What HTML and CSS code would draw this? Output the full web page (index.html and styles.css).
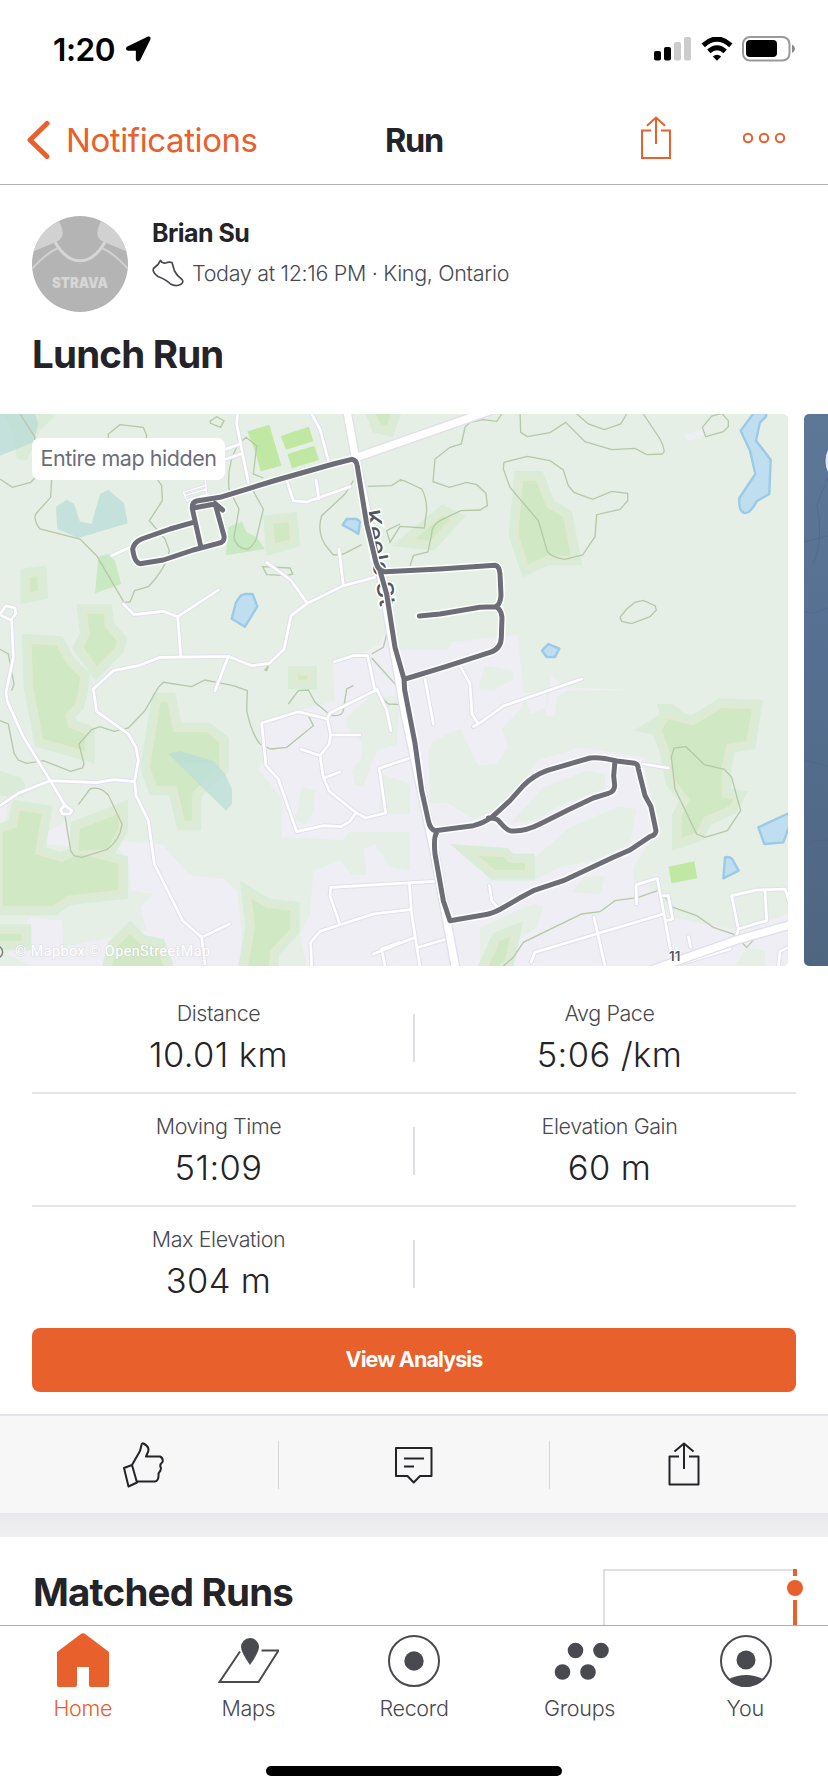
FILE: index.html
```html
<!DOCTYPE html>
<html lang="en">
<head>
<meta charset="utf-8">
<title>Run</title>
<link rel="stylesheet" href="styles.css">
</head>
<body>
<div class="screen">
  <header class="status">
    <div class="clock"><span>1:20</span>
      <svg width="26" height="26" viewBox="0 0 26 26"><path d="M23.4 1.2 2.2 11.4Q.8 13.5 3 13.9H11.6V23.2Q12.6 26 14.7 23.4L24.8 2.8Q25 .8 23.4 1.2Z" stroke="#000" stroke-width="1.500" stroke-linejoin="round"/></svg>
    </div>
    <div class="signals">
      <svg width="38" height="24" viewBox="0 0 38 24"><rect y="14" width="7" height="9.5" rx="2"/><rect x="10" y="10" width="7" height="13.5" rx="2"/><rect x="20" y="5" width="7" height="18.5" rx="2" fill="#ccc"/><rect x="30" width="7" height="23.5" rx="2" fill="#ccc"/></svg>
      <svg class="wifi" width="32" height="24" viewBox="0 0 32 24"><path d="M2.2 8.3Q16-4.200 29.800 8.300" fill="none" stroke="#000" stroke-width="5"/><path d="M7.800 14.300Q16 7.200 24.200 14.300" fill="none" stroke="#000" stroke-width="5"/><path d="M11.800 19.500Q16 16 20.200 19.500L16 23.800Z"/></svg>
      <svg width="54" height="26" viewBox="0 0 54 26"><rect x="1" y="1" width="46.500" height="23.500" rx="7" fill="none" stroke="#999" stroke-width="2"/><rect x="4" y="4" width="31" height="17" rx="4"/><path d="M50 8.500Q53 10 53 12.700T50 17Z" fill="#888"/></svg>
    </div>
  </header>

  <nav class="nav">
    <a class="back"><svg width="24" height="40" viewBox="0 0 24 40"><path d="M20 3.500 3 20 20 36.500" fill="none" stroke="currentColor" stroke-width="5" stroke-linecap="round" stroke-linejoin="round"/></svg><span>Notifications</span></a>
    <h1>Run</h1>
    <div class="actions">
      <svg width="30" height="44" viewBox="0 0 30 44"><path d="M10 14.500H1V42H29V14.500H20M15 28V1.500M6 9.800 15 1.500 24 9.800" fill="none" stroke="currentColor" stroke-width="2"/></svg>
      <svg width="42" height="12" viewBox="0 0 42 12" fill="none" stroke="currentColor" stroke-width="2"><circle cx="5" cy="6" r="4.200"/><circle cx="21" cy="6" r="4.200"/><circle cx="37" cy="6" r="4.200"/></svg>
    </div>
  </nav>

  <section class="summary">
    <div class="athlete">
      <svg class="avatar" width="96" height="96" viewBox="0 0 96 96">
        <rect width="96" height="96" fill="#b4b4b4"/>
        <path d="M0 36 24 26Q33 22 30 12L25 0H0ZM96 36 72 26Q63 22 66 12L71 0H96Z" fill="#d1d1d1"/>
        <path d="M23 26C37 51 59 51 73 26" fill="none" stroke="#d6d6d6" stroke-width="3"/>
        <path d="M0 53Q13 38 26 32M96 53Q83 38 70 32" fill="none" stroke="#d1d1d1" stroke-width="2"/>
        <text x="20" y="72" textLength="56" lengthAdjust="spacingAndGlyphs">STRAVA</text>
      </svg>
      <div class="who">
        <div class="name">Brian Su</div>
        <div class="meta"><svg width="32" height="28" viewBox="0 0 32 28"><path d="M8.500 1.500Q10.500 5 13.500 4Q17 2.500 20 3.500L22.500 12Q25 17 30 20.500Q32 23 29 25.300Q24 28 18.500 25Q14 20.500 6 17.500Q0 13 1.500 9.500L6 5.500Q7.500 3 8.500 1.500Z" fill="none" stroke="currentColor" stroke-width="1.700" stroke-linejoin="round"/></svg><span>Today at 12:16 PM · King, Ontario</span></div>
      </div>
    </div>
    <h2 class="title">Lunch Run</h2>
  </section>

  <section class="carousel">
    <div class="map">
      <svg width="788" height="552" viewBox="0 0 2364 1656" preserveAspectRatio="none">
        <defs>
          <g id="woods">
            <path d="M90 490 112 487 114 530 90 535Z"/>
            <path d="M262 600H310L315 640 350 680 345 700 290 755 250 700 270 660Z"/>
            <path d="M95 690 170 695 200 750 240 790 235 830 225 870 195 900 205 940 255 960 255 1010 130 975 100 820Z"/>
            <path d="M820 330 865 325 870 375 825 388Z"/>
            <path d="M893 785H922V797H893Z"/>
            <path d="M1120-20H1180L1160 35 1140 30Z"/>
            <path d="M1245 375 1330 305 1350 315 1290 380Z"/>
            <path d="M1570 200H1608L1640 280 1690 310 1712 425 1640 425 1585 450 1555 360Z"/>
            <path d="M482 865H502L520 955H620L658 985V1060L600 1110 575 1140V1220H555L530 1115H470L450 1060Z"/>
            <path d="M60 1190 125 1200 105 1320 185 1345 240 1320 355 1350V1428L200 1445 160 1475H8V1255L50 1240Z"/>
            <path d="M240 1245 355 1200V1245L320 1305 235 1310Z"/>
            <path d="M0 1560H65V1580H0Z"/>
            <path d="M390 1560 420 1590 470 1600 500 1680H330L350 1600Z"/>
            <path d="M755 1455 800 1482 870 1490V1545L810 1610 805 1680H740L765 1540Z"/>
            <path d="M2005 915 2080 935 2165 882 2255 885 2240 980 2180 990 2165 1060V1150L2200 1155 2190 1175 2110 1210 2090 1255 2045 1270V1210L2070 1155 2025 1100 2005 1000 1985 950Z"/>
            <path d="M1435 1325 1510 1330 1530 1348H1575V1368H1485Z"/>
            <path d="M1500 1580 1530 1568 1515 1640 1470 1670H1460Z"/>
          </g>
          <g id="water-areas">
            <path d="M1270 320 1280 328 1275 365 1260 355 1228 338 1240 320Z" transform="translate(-200 -5)"/>
            <path d="M722 545 735 540H758L772 578 735 638 695 614 708 565Z"/>
            <path d="M1645 690 1678 704 1665 729H1640L1626 710Z"/>
            <path d="M2268-12H2300L2298 8 2280 25 2268 80 2312 137 2308 240 2270 262Q2250 300 2232 297 2215 290 2218 252L2266 180 2250 110 2222 50Z"/>
            <path d="M2367 1197 2275 1240 2293 1290 2350 1285 2370 1230Z"/>
            <path d="M2175 1330Q2195 1325 2202 1345L2216 1370 2170 1393Z"/>
          </g>
          <g id="streets">
            <path d="M0 600 18 575 45 582 47 600 33 618 5 605M35 620 40 730 18 835 22 862 68 965 152 1102 195 1175 215 1190 210 1200 187 1200 182 1187 195 1172M-10 1182 55 1138 150 1100 290 1106 342 1097 404 1103M370 570 402 602 490 592 533 608 655 528M533 608 542 724M280 825 340 770 415 755 480 730 685 727 755 755 808 748 852 706 873 605 922 568 1030 515 1125 490M922 568 872 498 800 445M1017 405 1030 515M685 727 645 830M280 825 290 892 385 960 408 1000 415 1040 404 1100 408 1145 445 1220 463 1350 548 1520 605 1570 688 1530M605 1570 615 1650"/>
            <path d="M714-12 710 30 745 205M720 90 670 108M722 120 670 138M935 0 960 45 985 140M862 205 880 260 920 264 1050 218M948 198 957 255M335 425 385 402"/>
            <path d="M1003 743 1060 725 1103 725 1125 830 990 897 982 915 895 893 785 927 798 1055 835 1095 890 1253 970 1235 1023 1238 1050 1222 1068 1196 988 1132 970 1090 960 1025 988 990 992 962 982 915M993 963H1080M960 1025 903 1006M972 1092 1020 1074M1068 1196 1097 1212 1157 1197 1138 1063 1230 1032M1130 825 1160 888 1173 950"/>
            <path d="M992 1420 1305 1402M992 1423 990 1445 1020 1533M1230 1487 1120 1500 960 1552 932 1585 935 1656M1145 1605 1200 1585M1145 1605 1155 1656M1228 1408 1235 1500 1260 1660M1120 1620 1245 1570M1255 1600 1340 1575M1275 795 1300 930M1380 755 1410 810 1416 900 1435 930 1420 938M1435 930 1510 876 1745 795M1930 1050 2005 1062M1468 1415 1475 1460 1495 1483M1593 1645 1605 1615 1990 1500M1782 1510 1815 1656M1910 1470 1908 1412 1972 1393 2012 1610M2005 1660 2190 1605V1575M2065 1568 2072 1600M2210 1565 2215 1545 2195 1445 2270 1428 2355 1425 2370 1470M2295 1430 2300 1520 2215 1545M1990 1445 2005 1445 2018 1515 2000 1520M2335 1660 2340 1612 2370 1598"/>
          </g>
          <path id="lanes" d="M550 235 615 215M555 245 620 225M562 258 625 240M550 235 562 262M615 190 622 262"/>
          <path id="route" d="M668 288 645 268 672 366Q675 385 655 388L580 408 490 438 420 449Q403 445 398 405 402 385 425 375L510 345 580 325M645 270 580 282M602 396 577 285Q575 265 590 261L660 250 830 198 1000 150 1055 136Q1070 138 1072 158L1100 330 1128 445Q1135 472 1155 473L1320 465 1485 454Q1498 456 1500 480L1503 545Q1500 575 1485 578L1440 580 1320 600 1258 606M1485 578Q1503 582 1506 610L1504 670Q1503 705 1470 715L1330 760 1215 795M1140 470 1160 540 1185 700 1212 795 1214 828 1245 988 1265 1130 1285 1220Q1290 1245 1305 1250L1420 1235Q1450 1228 1475 1210L1530 1160 1570 1115Q1600 1085 1640 1070L1770 1032Q1800 1028 1850 1041L1905 1048Q1914 1050 1915 1065L1935 1145 1953 1178 1968 1250Q1968 1262 1950 1268L1890 1308 1840 1330 1690 1400 1600 1430Q1560 1450 1520 1475 1480 1500 1450 1503L1350 1520 1330 1460 1305 1320Q1300 1270 1310 1255M1845 1040 1841 1085 1844 1115Q1843 1134 1825 1138L1780 1152 1710 1185 1620 1230Q1570 1255 1530 1250 1520 1248 1500 1225 1490 1210 1465 1212"/>
        </defs>
        <rect width="2364" height="1656" fill="#e5efe6"/>
        <g fill="#efeef4">
          <path d="M998 745 1100 710 1140 690 1160 650 1200 708H1345L1355 685 1552 662 1570 828 1590 900 1640 880 1655 782 1690 820 1900 828 1700 830 1670 850 1665 905H1637L1640 830 1575 838 1565 880 1505 945 1525 1000 1490 1050 1435 1055 1380 945 1300 980 1285 1010 1290 1170 1340 1165 1420 1215 1530 1170 1610 1040 1740 1000 1930 1030 1970 1250 1900 1360V1400L1970 1430 2010 1510 2220 1550 2364 1500V1656H920L900 1560 930 1500 940 1370 1020 1340 1055 1382H1100L1090 1305 1125 1290 1170 1360 1230 1370V1255H1045L1030 1278 845 1270V1155L775 1065 795 1030 790 920 1005 860Z"/>
          <path d="M340 1280 485 1290 570 1383 670 1395 710 1430 725 1550V1656H100L20 1620 90 1510 185 1520 190 1600 440 1550 420 1480 460 1440 395 1430 385 1345ZM0 1170 20 1170 15 1230 0 1235ZM140 1255 200 1220 230 1300 135 1290Z"/>
          <path d="M2052 63 2130 38 2100 73 2065 81Z"/>
        </g>
        <g fill="#e5efe6">
          <path d="M1040 910 1120 840 1200 850 1190 990 1130 1010 1090 1115H1065L1055 1070 1085 1030 1085 985 1040 940ZM905 1118 945 1130 942 1190 915 1232 885 1218ZM1145 1080 1230 1110V1200H1137ZM1455 755 1540 770V795L1480 828 1435 820ZM1535 1225 1630 1120 1760 1070 1815 1080V1125L1700 1165 1600 1220ZM1450 1400 1610 1325 1710 1240 1855 1178 1910 1185 1890 1290 1780 1340 1680 1360 1600 1400ZM1715 1435 1750 1390 1815 1385 1800 1440ZM1440 1540 1600 1470 1630 1480 1610 1540 1520 1600 1500 1656H1440ZM2205 1656 2240 1600 2295 1610V1656Z"/>
        </g>
        <g fill="#daecd8"><path d="M0 1070 60 1090 75 1110 70 1150 0 1145ZM0-12H180L120 50 80 140 50 135 40 60ZM1900 950 1980 900 1970 870 2020 870 2060 905 2000 970Z"/></g>
        <use href="#woods" class="woods-edge"/>
        <use href="#woods" class="woods-rim"/>
        <use href="#woods" class="woods-core"/>
        <g class="wet">
          <path d="M0 0H105L115 30 100 85 0 125Z"/>
          <path d="M168 278 200 257 222 270 240 323 275 330 300 240 325 227 372 268 383 328 235 372 172 345Z"/>
          <path d="M505 1020 538 1011 640 1040 675 1080 696 1125V1170L678 1190Z"/>
        </g>
        <g fill="#c9e9c2"><path d="M295 428 325 420 345 440 363 510 285 538ZM685 340 725 323 740 355 770 370 795 405 678 424Z"/></g>
        <g fill="#c1e8a3"><path d="M742 52 808 32 844 155 782 172 765 110ZM842 66 927 38 940 82 858 107ZM862 120 943 95 957 138 876 163ZM2006 1358 2083 1342 2092 1393 2014 1408Z"/></g>
        <g class="trails">
          <path d="M0 195 37 220 92 205 107 190 104 68 60 0M155 190 152 250 107 300Q100 320 120 345L240 375 290 425 372 565 390 564 404 530 445 518Q500 460 508 410L495 375 448 320 487 260 485 215 465 185M325 90V60L360 32 430 40 440 65 435 90M630 22 650 8 672 20 662 40 632 28ZM790 192 760 180 770 95 738 70 715 90Q680 150 687 225L717 285 702 370Q710 405 745 405 765 390 770 370L790 285 745 205M788 458 870 462 878 480 860 485 800 482ZM1060 200 1035 240 965 305Q950 350 975 392L1000 423 1030 420 1085 392M1103 217 1175 215 1205 195M795 768 805 756 800 770Z"/>
          <path d="M1505 0 1490 22 1450 17 1410 25 1395 40 1384 90 1350 100 1305 135 1299 203 1348 220 1400 205 1430 212 1458 238 1462 275 1440 288 1382 290 1320 320Q1295 335 1295 360L1284 414 1240 425 1230 455M1200 200 1210 199 1265 225Q1280 250 1280 290L1273 342 1200 337 1170 385 1160 350 1200 330M1560-12 1562 55 1582 68 1650 56 1697 25 1755 83 1835 107 1905 103 1940 122 1987 120Q2000 115 1980 75L1930 0M1730 0 1765 30 1813 47 1862 30 1880 0M1512 145 1582 127 1650 140 1690 168 1705 215 1722 235 1778 256 1835 232 1883 238V260L1860 286 1790 302 1785 368 1748 423 1694 436Q1655 430 1642 412L1615 320 1530 220 1510 165ZM2107 40 2135 6 2165-2 2185 20 2185 38 2170 53 2117 68ZM1860 610 1880 585 1905 565 1930 559 1965 575 1969 588 1950 608 1895 629 1865 622Z"/>
          <path d="M0 920 25 930 42 1018 55 1038 80 1048 130 1040 212 1072 247 1062 252 1050 237 990 275 947 300 938 342 952 385 942 435 890 475 820 490 805 575 818 615 798 700 815 742 830 740 890Q755 960 780 990L812 1005 860 1000 940 935 925 905M195 1205 212 1310 222 1325 245 1330 320 1307Q360 1280 366 1230L325 1143Q300 1115 270 1125L235 1172M0 706 25 720 42 810 35 830M865 870 895 830 925 828 945 865 990 903Q1025 910 1030 890L1040 825 1060 815M1115 720 1150 700 1160 660M1115 732 1230 860 1205 872 1165 870 1120 828"/>
          <path d="M1510 1656 1540 1630 1570 1585 1745 1500 1800 1493 1845 1460 1915 1450 1972 1430M1990 1445 2020 1480 2090 1505 2140 1540 2200 1560 2240 1600 2270 1568M2014 1030 2022 1002 2058 998 2113 1052 2173 1066 2195 1090 2222 1190 2182 1250 2115 1270 2090 1260 2025 1125Z"/>
        </g>
        <use href="#water-areas" class="ponds"/>
        <use href="#streets" class="street-case"/>
        <use href="#streets" class="street"/>
        <use href="#lanes" class="street-case lane-case"/>
        <use href="#lanes" class="street lane"/>
        <path class="road-case" d="M1040-12 1072 160 1145 500 1215 900 1300 1300 1370 1680M1065 132 1470-10M1920 1680 2210 1578 2380 1530"/>
        <path class="road" d="M1040-12 1072 160 1145 500 1215 900 1300 1300 1370 1680M1065 132 1470-10M1920 1680 2210 1578 2380 1530"/>
        <text class="road-name" transform="translate(1090 292) rotate(80)" textLength="292" lengthAdjust="spacingAndGlyphs">Keele St</text>
        <text class="road-number" x="2007" y="1640">11</text>
        <use href="#route" class="route-case"/>
        <use href="#route" class="route"/>
        <circle cx="-10" cy="1614" r="18" fill="none" stroke="#777" stroke-width="4"/>
        <text class="credit" x="45" y="1626" textLength="585">© Mapbox © OpenStreetMap</text>
      </svg>
      <span class="badge">Entire map hidden</span>
    </div>
    <svg class="next" width="40" height="552" viewBox="0 0 40 552"><path d="M9 150Q20 130 13 90L24 64M0 128 24 122M0 198Q12 200 24 194M0 346 24 352M0 430Q12 425 24 426" fill="none" stroke="#4c6684" opacity=".6"/><ellipse cx="32" cy="47" rx="10.500" ry="17" fill="#e4e6ee"/></svg>
  </section>

  <section class="stats">
    <div class="row"><div class="stat"><span>Distance</span><b>10.01 km</b></div><i></i><div class="stat"><span>Avg Pace</span><b>5:06 /km</b></div></div>
    <div class="row"><div class="stat"><span>Moving Time</span><b>51:09</b></div><i></i><div class="stat"><span>Elevation Gain</span><b>60 m</b></div></div>
    <div class="row"><div class="stat"><span>Max Elevation</span><b>304 m</b></div><i></i><div class="stat"></div></div>
    <button class="analysis">View Analysis</button>
  </section>

  <section class="social">
    <div><svg width="42" height="46" viewBox="0 0 42 46"><path d="M1 26 9 23 14 40.500 5.500 44.500ZM9 23 17 9 18.500 3Q19 .8 20.500 1.500 27 5 25 10L23 14.500H37Q40.500 16 39.500 20 36 23 38 26 38 29 35.500 31.500 36 39 32 39.500H13.500" fill="none" stroke="currentColor" stroke-width="2" stroke-linejoin="round"/></svg></div>
    <div><svg width="38" height="38" viewBox="0 0 38 38"><path d="M1 2H36.500V30H25L18.700 36.500 12.500 30H1ZM9 12.500H29M9 20.500H19" fill="none" stroke="currentColor" stroke-width="2" stroke-linejoin="round"/></svg></div>
    <div><svg width="32" height="44" viewBox="0 0 32 44"><path d="M11 14.500H1.500V42.500H30.500V14.500H21M16 27V1.500M6.500 9.500 16 1.500 25.500 9.500" fill="none" stroke="currentColor" stroke-width="2" stroke-linejoin="round"/></svg></div>
  </section>
  <div class="gap"></div>

  <section class="matched">
    <h2>Matched Runs</h2>
    <svg width="204" height="58" viewBox="0 0 204 58"><path d="M1 58V3H192" fill="none" stroke="#dfdfe6" stroke-width="2"/><path d="M192 2V9M192 33V58" stroke="#e8602c" stroke-width="4"/><circle cx="192" cy="21" r="8" fill="#e8602c"/></svg>
  </section>

  <footer class="tabs">
    <a class="tab active"><svg width="52" height="54" viewBox="0 0 52 54"><path d="M24.500 .5Q26 0 27.500 .5L52 19V52Q52 54 50 54H34Q32 54 32 52V34H20V52Q20 54 18 54H2Q0 54 0 52V19Z" fill="currentColor"/></svg><span>Home</span></a>
    <a class="tab"><svg width="62" height="54" viewBox="-1 0 62 54"><path d="M22 18.500 1.500 49H40.500L60.500 17.500H43.500" fill="none" stroke="currentColor" stroke-width="2"/><path d="M32 32Q23 19 23 14A9 9 0 0 1 41 14Q41 19 32 32Z" fill="currentColor"/></svg><span>Maps</span></a>
    <a class="tab"><svg width="54" height="54" viewBox="0 0 54 54"><circle cx="27" cy="28" r="25" fill="none" stroke="currentColor" stroke-width="2"/><circle cx="27" cy="28" r="9.700" fill="currentColor"/></svg><span>Record</span></a>
    <a class="tab"><svg width="60" height="54" viewBox="-2 0 60 54" fill="currentColor"><circle cx="23.500" cy="17.500" r="7.800"/><circle cx="49" cy="17.500" r="7.800"/><circle cx="10.500" cy="39" r="7.800"/><circle cx="36" cy="39" r="7.800"/></svg><span>Groups</span></a>
    <a class="tab"><svg width="54" height="54" viewBox="-1 0 54 54"><circle cx="27" cy="28" r="25" fill="none" stroke="currentColor" stroke-width="2"/><circle cx="27" cy="27" r="9.500" fill="currentColor"/><path d="M10 46Q27 38 44 46Q27 62 10 46Z" fill="currentColor"/></svg><span>You</span></a>
  </footer>
  <div class="home-bar"></div>
</div>
</body>
</html>
```
FILE: styles.css
```css
* { box-sizing: border-box; }
body { margin: 0; background: #fff; color: #242428; font-family: Inter, "Liberation Sans", sans-serif; }
h1, h2 { margin: 0; font-weight: 700; }
svg { display: block; flex: none; }
.screen { width: 828px; height: 1792px; display: flex; flex-direction: column; overflow: hidden; }
.screen > * { flex: none; }

.status { height: 92px; padding: 29px 32px 0 53px; display: flex; justify-content: space-between; color: #000; }
.clock { display: flex; height: 40px; gap: 10px; align-items: center; font-size: 31.5px; font-weight: 600; letter-spacing: -.4px; }
.signals { display: flex; height: 40px; align-items: center; gap: 9px; }

.nav { height: 93px; padding: 3px 43px 0 27px; display: grid; grid-template-columns: 327px 120px 1fr; align-items: center; border-bottom: 1px solid #b2b2b2; color: #e8602c; }
.nav h1 { padding-top: 1px; font-size: 32.5px; letter-spacing: -1.2px; text-align: center; color: #242428; }
.back { display: flex; align-items: center; gap: 15px; font-size: 33px; letter-spacing: -.4px; }
.actions { display: flex; justify-content: flex-end; align-items: center; gap: 72px; padding-bottom: 4px; }

.summary { height: 229px; padding: 31px 32px 0; }
.athlete { display: flex; gap: 24px; }
.avatar { border-radius: 50%; }
.avatar text { font: 900 15px Inter, sans-serif; fill: #d6d6d6; }
.name { font-size: 25px; font-weight: 700; line-height: 34px; letter-spacing: -.55px; }
.meta { display: flex; align-items: center; gap: 8px; height: 30px; margin-top: 8px; font-size: 21.5px; font-weight: 350; color: #494950; letter-spacing: -.32px; }
.title { margin-top: 17px; font-size: 38.5px; line-height: 50px; letter-spacing: -.8px; }

.carousel { height: 552px; display: flex; gap: 16px; overflow: hidden; }
.map { position: relative; width: 788px; flex: none; border-radius: 0 5px 5px 0; overflow: hidden; }
.badge { position: absolute; left: 32px; top: 24px; width: 193px; height: 42px; border-radius: 8px; background: #fff; color: #6d6d78; font-size: 21.5px; line-height: 41px; text-align: center; letter-spacing: -.45px; white-space: nowrap; }
.next { border-radius: 5px 0 0 5px; background: linear-gradient(#5d7897, #546f91 45%, #4f6680); }
.woods-edge { fill: #daecd8; stroke: #daecd8; stroke-width: 58; }
.woods-rim { fill: #deead1; stroke: #deead1; stroke-width: 26; }
.woods-core { fill: #d1e8c4; }
.wet { fill: #bdded9; opacity: .8; }
.trails { fill: none; stroke: #b4c9a8; stroke-width: 4; }
.ponds { fill: #bfdef0; stroke: #9bc9e6; stroke-width: 7; stroke-linejoin: round; }
.street-case, .street, .road-case, .road, .route-case, .route { fill: none; stroke-linecap: round; stroke-linejoin: round; }
.street-case { stroke: #e0e0eb; stroke-width: 14; }
.street { stroke: #fff; stroke-width: 8; }
.lane-case { stroke-width: 9; }
.lane { stroke-width: 4; }
.road-case { stroke: #e0e0eb; stroke-width: 30; }
.road { stroke: #fff; stroke-width: 22; }
.route-case { stroke: #fff; stroke-width: 24; }
.route { stroke: #6d6d78; stroke-width: 15; }
.road-name { font: 500 68px Inter, sans-serif; fill: #55555c; stroke: #fff; stroke-width: 10; paint-order: stroke; }
.road-number { font: 600 40px Inter, sans-serif; fill: #55555c; stroke: #fff; stroke-width: 5; paint-order: stroke; }
.credit { font: 400 43px Roboto, sans-serif; fill: #fff; stroke: #c8cccf; stroke-opacity: .35; stroke-width: 5; paint-order: stroke; }

.stats { height: 448px; padding: 15px 32px 0; }
.row { height: 113px; display: grid; grid-template-columns: 1fr 18px 1fr; border-bottom: 2px solid #e4e4ea; }
.row:nth-child(3) { border-color: transparent; }
.row i { width: 2px; height: 48px; margin: 33px 0 0 8px; background: #dfdfe3; }
.stat { display: flex; flex-direction: column; align-items: center; padding-top: 18px; }
.stat span { font-size: 21.5px; line-height: 28px; font-weight: 350; color: #494950; letter-spacing: -.42px; }
.stat b { margin-top: 8px; font-size: 34.5px; line-height: 40px; font-weight: 350; letter-spacing: .4px; }
.analysis { display: block; width: 764px; height: 64px; margin-top: 8px; padding: 0 0 2px; border: 0; border-radius: 8px; background: #e8602c; color: #fff; font: 700 21.5px Inter, sans-serif; letter-spacing: -.9px; }

.social { height: 99px; border-top: 2px solid #e4e4ea; background: #f7f7f7; display: grid; grid-template-columns: 278px 271px 279px; align-items: center; }
.social div { height: 48px; display: flex; align-items: center; justify-content: center; padding-left: 9px; }
.social div + div { border-left: 1px solid #d6d6d8; padding-left: 0; }
.social div:last-child { padding: 0 10px 2px 0; }
.gap { height: 24px; background: linear-gradient(#e9e9eb, #f0f0f3); }

.matched { height: 88px; padding: 30px 22px 0 33px; display: flex; justify-content: space-between; }
.matched h2 { font-size: 38.5px; line-height: 50px; letter-spacing: -.8px; }
.matched svg { margin-right: -1px; }
.tabs { height: 126px; border-top: 1px solid #aeaeae; padding-top: 7px; display: grid; grid-template-columns: repeat(5, 1fr); background: #fff; }
.tab { display: flex; flex-direction: column; align-items: center; gap: 7px; color: #494950; font-size: 21.5px; font-weight: 350; line-height: 28px; letter-spacing: -.3px; }
.active { color: #e8602c; }
.home-bar { width: 296px; height: 10px; margin: 15px auto 0; border-radius: 5px; background: #000; }
```
